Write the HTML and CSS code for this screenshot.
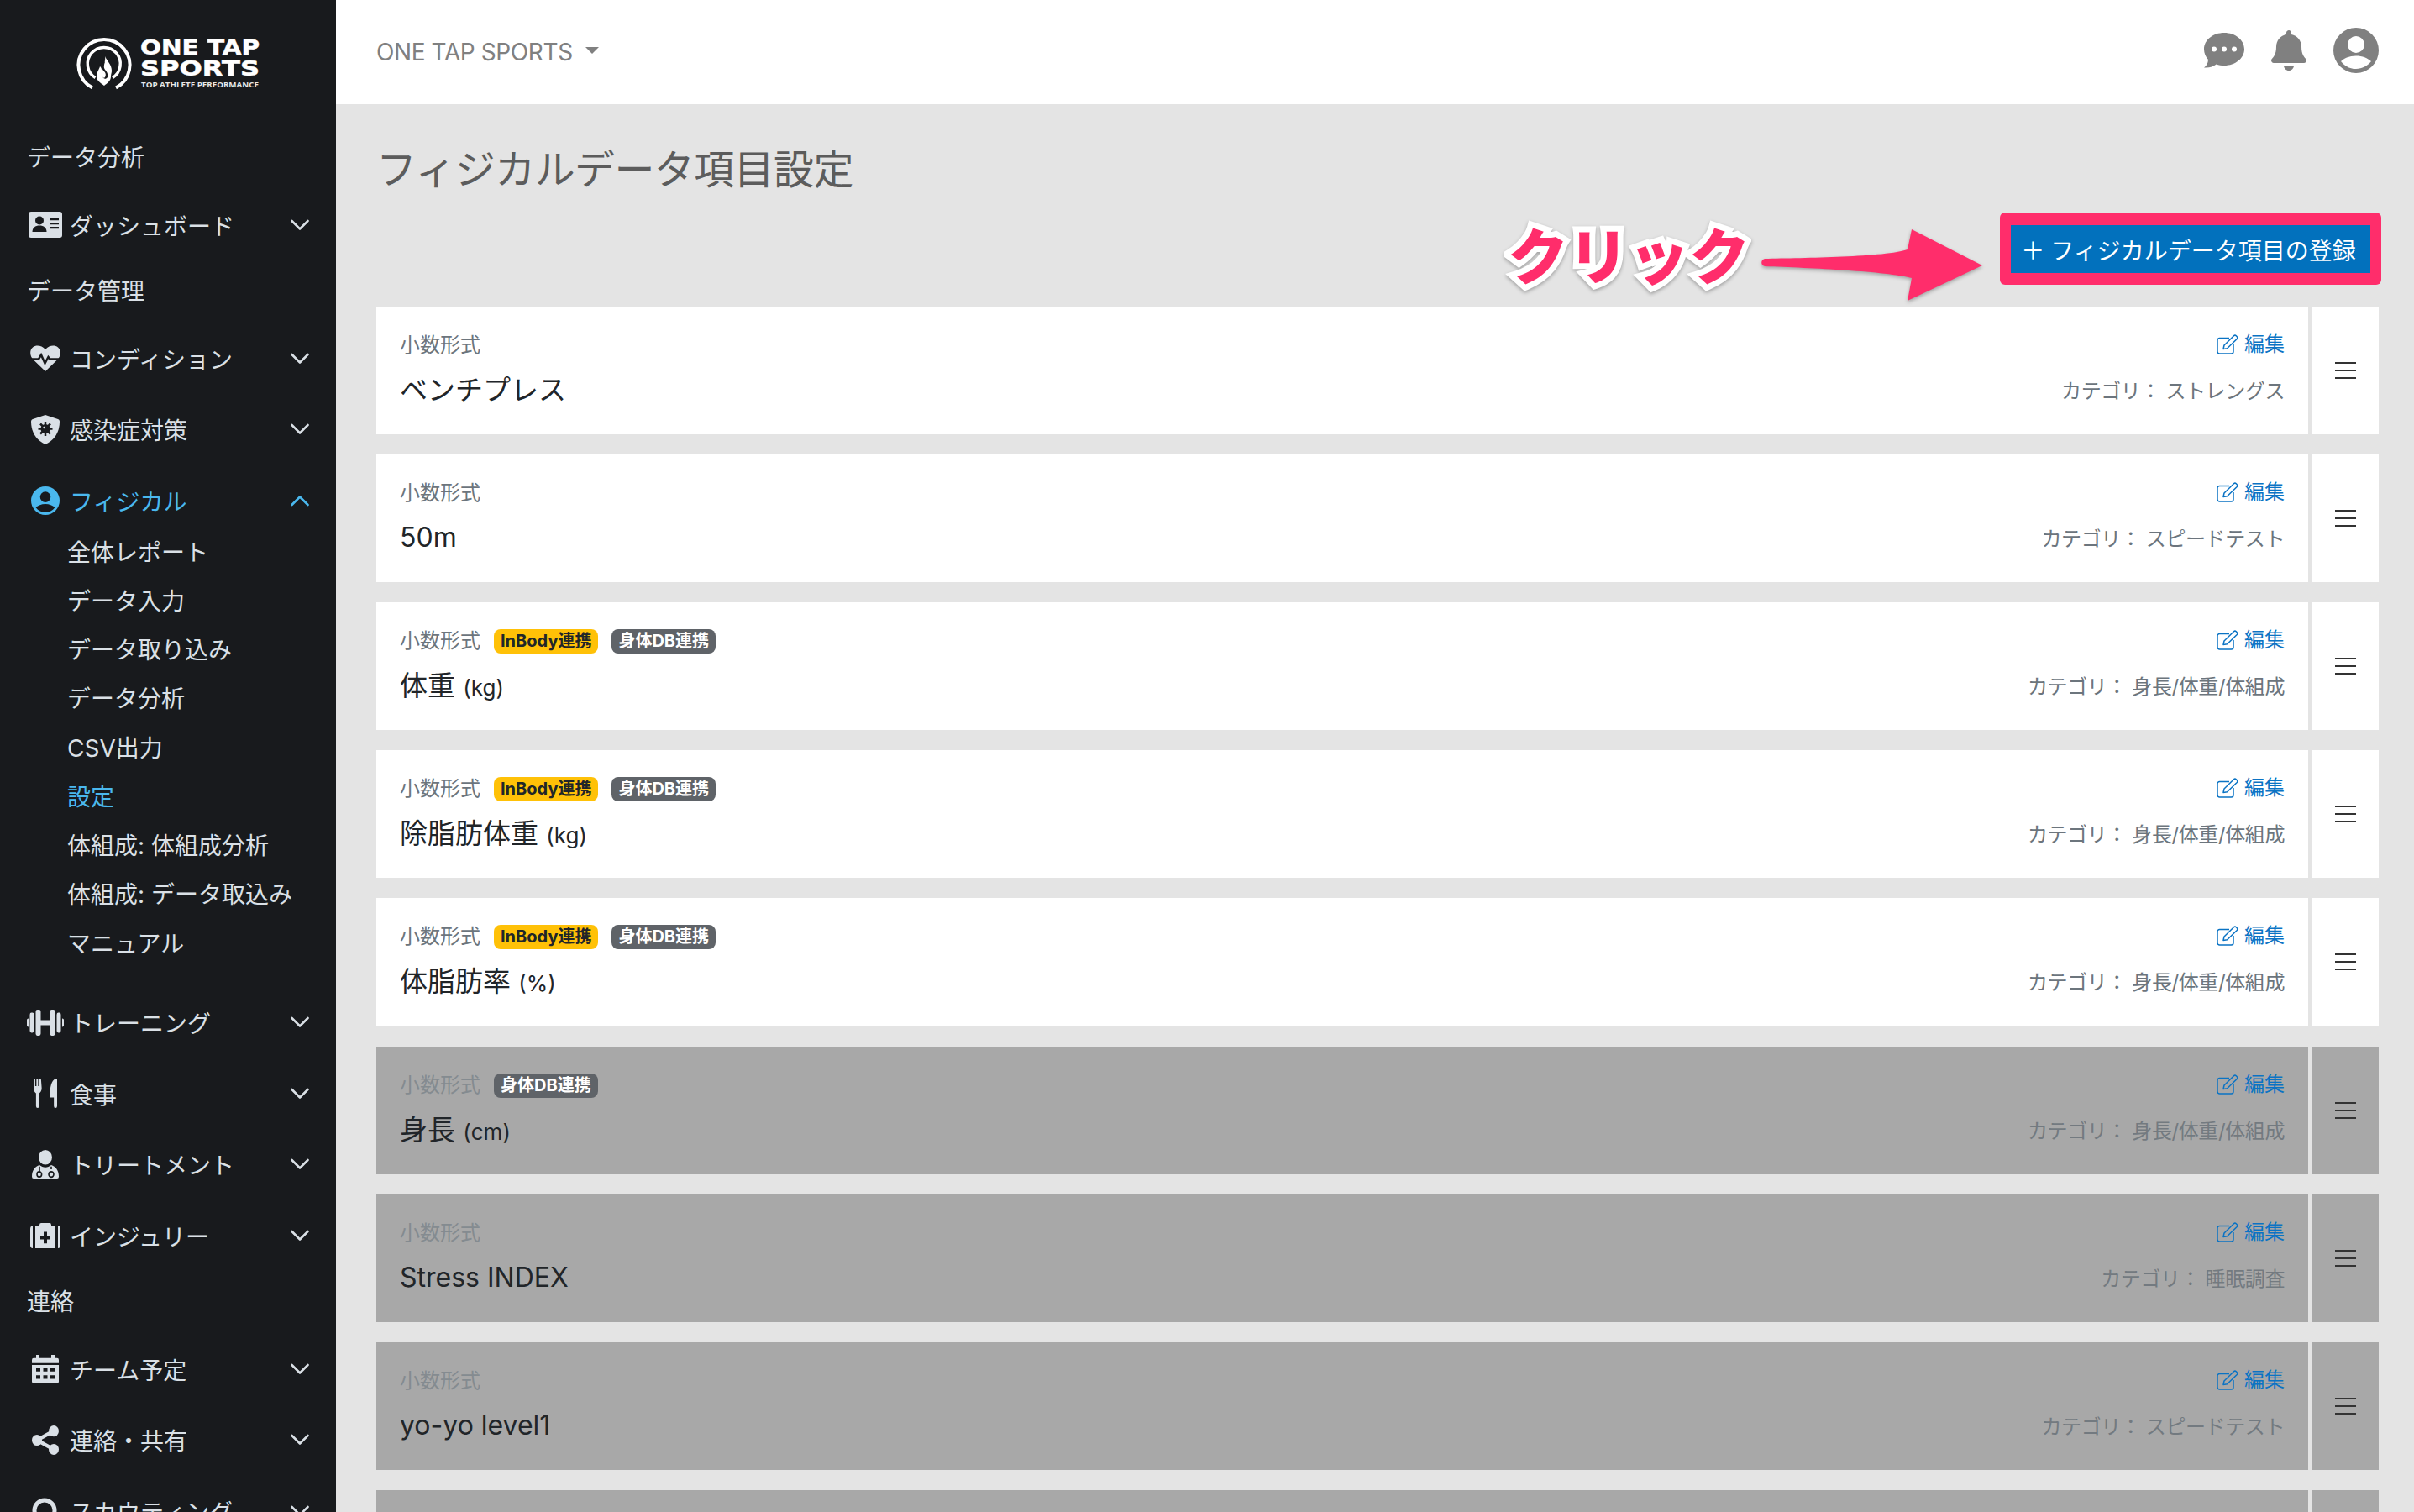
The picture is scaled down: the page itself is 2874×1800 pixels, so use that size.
FILE: index.html
```html
<!DOCTYPE html>
<html lang="ja">
<head>
<meta charset="utf-8">
<title>フィジカルデータ項目設定</title>
<link rel="stylesheet" href="styles.css">
</head>
<body>
<svg class="defs" width="0" height="0" aria-hidden="true">
  <symbol id="chev" viewBox="0 0 22 14"><path d="M1.5 2 11 11.5 20.5 2" fill="none" stroke="currentColor" stroke-width="2.6" stroke-linecap="round" stroke-linejoin="round"/></symbol>
  <symbol id="edit" viewBox="0 0 26 24"><path d="M15 4.5H3.5A2.5 2.5 0 0 0 1 7v13.5A2.5 2.5 0 0 0 3.5 23h14a2.5 2.5 0 0 0 2.5-2.5V12" fill="none" stroke="currentColor" stroke-width="1.5"/><path d="M8 17.5 9 13 20.5 1.8a2 2 0 0 1 2.8 0l.9.9a2 2 0 0 1 0 2.8L12.6 16.8Z" fill="none" stroke="currentColor" stroke-width="1.5" stroke-linejoin="round"/></symbol>
  <symbol id="user" viewBox="0 0 54 54"><path fill="currentColor" fill-rule="evenodd" d="M27 0a27 27 0 1 0 0 54 27 27 0 0 0 0-54Zm0 10a10 10 0 1 1 0 20 10 10 0 0 1 0-20Zm0 23.5c7.500 0 14 2.600 18 6.600C40.500 45.800 34.300 49 27 49S13.500 45.800 9 40.100c4-4 10.500-6.600 18-6.600Z"/></symbol>
</svg>
<div class="app">
  <aside class="sidebar">
    <svg class="logo" viewBox="0 0 400 150" width="400" height="150" role="img" aria-label="ONE TAP SPORTS">
      <path class="logo-arc" stroke-width="4" d="M110 104.500A30.500 30.500 0 1 1 138 104.500"/>
      <path class="logo-arc" stroke-width="3.500" d="M113.500 92.500A19.500 19.500 0 1 1 134 92.500"/>
      <path class="logo-flame" d="M125 67c2 5 8 10 8 17 0 3-1 4-1 7 0 5-4 8-8 11-4-3-9-6-9-11 0-5 3-8 4-12 1 1 2 2 2 4 2-5 5-10 4-16Z"/>
      <path class="logo-flame-in" d="M125 73c-3 4-5 7-2 11 2 2 4 4 2 8-1 1-2 1-3-1 1 3 4 4 6 1 1-4-1-7-3-9-2-3-1-6 0-10Z"/>
      <text class="logo-big" x="167" y="65" textLength="142" lengthAdjust="spacingAndGlyphs">ONE TAP</text>
      <text class="logo-big" x="167" y="90" textLength="142" lengthAdjust="spacingAndGlyphs">SPORTS</text>
      <text class="logo-small" x="168" y="104" textLength="140" lengthAdjust="spacingAndGlyphs">TOP ATHLETE PERFORMANCE</text>
    </svg>
    <nav>
      <div class="nav-label">データ分析</div>
      <div class="nav-item"><span class="nav-ico"><svg width="40" height="31" viewBox="0 0 40 31"><rect class="ic" width="40" height="31" rx="3"/><circle class="ic-d" cx="13" cy="10.500" r="5"/><path class="ic-d" d="M4.500 24c0-5 3.500-7.500 8.500-7.500s8.500 2.500 8.500 7.500Z"/><path class="ic-d" d="M25 8h11v2.200H25zM25 13h11v2.200H25zM25 18h11v2.200H25z"/></svg></span><span>ダッシュボード</span><svg class="chev"><use href="#chev"/></svg></div>
      <div class="nav-label">データ管理</div>
      <div class="nav-item"><span class="nav-ico"><svg width="36" height="31" viewBox="0 0 36 31"><path class="ic" d="M18 31 4 17.500C-1 12.500-.8 5.500 3 2.500 7-.8 13.500 0 18 5c4.500-5 11-5.800 15-2.500 3.800 3 4 10-1 15Z"/><path class="ic-line" d="M0 16.500h10l3-5 4.500 10 4-7.500 2 2.500H36"/></svg></span><span>コンディション</span><svg class="chev"><use href="#chev"/></svg></div>
      <div class="nav-item"><span class="nav-ico"><svg width="34" height="35" viewBox="0 0 34 35"><path class="ic" d="M17 0 32 5c1.500.5 2 1.500 2 3 0 12-6 22-17 27C6 30 0 20 0 8c0-1.500.5-2.500 2-3Z"/><circle class="ic-d" cx="17" cy="16.500" r="5.500"/><path class="ic-line" d="M17 8v17M8.500 16.500h17M11 10.500l12 12M23 10.500l-12 12"/><circle class="ic" cx="15.500" cy="15" r="1.200"/></svg></span><span>感染症対策</span><svg class="chev"><use href="#chev"/></svg></div>
      <div class="nav-item open"><span class="nav-ico"><svg width="34" height="34"><use href="#user"/></svg></span><span>フィジカル</span><svg class="chev up"><use href="#chev"/></svg></div>
      <ul class="sub">
        <li>全体レポート</li>
        <li>データ入力</li>
        <li>データ取り込み</li>
        <li>データ分析</li>
        <li>CSV出力</li>
        <li class="on">設定</li>
        <li>体組成: 体組成分析</li>
        <li>体組成: データ取込み</li>
        <li>マニュアル</li>
      </ul>
      <div class="nav-item"><span class="nav-ico"><svg width="44" height="31" viewBox="0 0 44 26" preserveAspectRatio="none"><path class="ic" d="M0 10.500a1.500 1.500 0 0 1 2-1.500V17a1.500 1.500 0 0 1-2-1.500ZM3.500 5A2 2 0 0 1 5.500 3h1a2 2 0 0 1 2 2v16a2 2 0 0 1-2 2h-1a2 2 0 0 1-2-2ZM10.500 2a2 2 0 0 1 2-2h2a2 2 0 0 1 2 2v8.500h11V2a2 2 0 0 1 2-2h2a2 2 0 0 1 2 2v22a2 2 0 0 1-2 2h-2a2 2 0 0 1-2-2v-8.500h-11V24a2 2 0 0 1-2 2h-2a2 2 0 0 1-2-2ZM35.500 5a2 2 0 0 1 2-2h1a2 2 0 0 1 2 2v16a2 2 0 0 1-2 2h-1a2 2 0 0 1-2-2ZM42 9a1.500 1.500 0 0 1 2 1.500v5a1.500 1.500 0 0 1-2 1.500Z"/></svg></span><span>トレーニング</span><svg class="chev"><use href="#chev"/></svg></div>
      <div class="nav-item"><span class="nav-ico"><svg width="28" height="35" viewBox="0 0 29 31" preserveAspectRatio="none"><path class="ic" d="M0 1c0-1 2-1 2 0v7h1.500V1c0-1 2-1 2 0v7H7V1c0-1 2-1 2.200 0l.8 9c0 3-1.500 4.500-3 5.500V29a2 2 0 0 1-4 0V15.500C1.500 14.500 0 13 0 10ZM29 1v28a2 2 0 0 1-4 0v-9h-3.500c-.8 0-1.500-.7-1.500-1.500C20 9 22 2 27 .2 28 0 29 0 29 1Z"/></svg></span><span>食事</span><svg class="chev"><use href="#chev"/></svg></div>
      <div class="nav-item"><span class="nav-ico"><svg width="32" height="34" viewBox="0 0 32 31" preserveAspectRatio="none"><circle class="ic" cx="16" cy="8" r="8"/><path class="ic" d="M0 29c0-7 4-11 9-12.500 2 1.500 4.500 2.500 7 2.500s5-1 7-2.500C28 18 32 22 32 29a2 2 0 0 1-2 2H2a2 2 0 0 1-2-2Z"/><path class="ic-thin" d="M9 18v5.500M23 18v3M6 26.500a2.800 2.800 0 1 0 5.600 0 2.800 2.800 0 1 0-5.600 0M20 26.500a3 3 0 0 1 6 0 3 3 0 0 1-6 0"/></svg></span><span>トリートメント</span><svg class="chev"><use href="#chev"/></svg></div>
      <div class="nav-item"><span class="nav-ico"><svg width="36" height="30" viewBox="0 0 36 26" preserveAspectRatio="none"><path class="ic" d="M0 6a3 3 0 0 1 3-3v23a3 3 0 0 1-3-3ZM33 3a3 3 0 0 1 3 3v17a3 3 0 0 1-3 3ZM11 3V2a2 2 0 0 1 2-2h10a2 2 0 0 1 2 2v1h5v23H6V3Zm3 0h8V2.500h-8Z"/><path class="ic-d" d="M16 9h4v4h4v4h-4v4h-4v-4h-4v-4h4Z"/></svg></span><span>インジュリー</span><svg class="chev"><use href="#chev"/></svg></div>
      <div class="nav-label">連絡</div>
      <div class="nav-item"><span class="nav-ico"><svg width="32" height="34" viewBox="0 0 32 31" preserveAspectRatio="none"><path class="ic" d="M5 0h4v3.500h14V0h4v3.500h3a2 2 0 0 1 2 2V9H0V5.500a2 2 0 0 1 2-2h3ZM0 11h32v18a2 2 0 0 1-2 2H2a2 2 0 0 1-2-2Z"/><path class="ic-d" d="M5 14h5v4H5zM13.500 14h5v4h-5zM22 14h5v4h-5zM5 22h5v4H5zM13.500 22h5v4h-5zM22 22h5v4h-5z"/></svg></span><span>チーム予定</span><svg class="chev"><use href="#chev"/></svg></div>
      <div class="nav-item"><span class="nav-ico"><svg width="32" height="35" viewBox="0 0 32 32" preserveAspectRatio="none"><circle class="ic" cx="26" cy="6" r="6"/><circle class="ic" cx="6" cy="16" r="6"/><circle class="ic" cx="26" cy="26" r="6"/><path class="ic-stroke" d="M26 6 6 16l20 10"/></svg></span><span>連絡・共有</span><svg class="chev"><use href="#chev"/></svg></div>
      <div class="nav-item"><span class="nav-ico"><svg width="32" height="32" viewBox="0 0 32 32"><circle class="ic-ring" cx="15" cy="15" r="12"/><path class="ic-stroke" d="m24 24 7 7"/></svg></span><span>スカウティング</span><svg class="chev"><use href="#chev"/></svg></div>
    </nav>
  </aside>

  <div class="content">
    <header class="topbar">
      <div class="team">ONE TAP SPORTS<span class="caret"></span></div>
      <div class="top-icons">
        <svg width="48" height="42" viewBox="0 0 48 42"><path class="ti" fill-rule="evenodd" d="M24 0c13.300 0 24 8.600 24 19.500S37.300 39 24 39c-3.300 0-6.400-.5-9.300-1.500C11.500 40 6.500 42 0 41.500c3-2 4.800-5.500 5-9.500C1.900 28.500 0 24.200 0 19.500 0 8.600 10.700 0 24 0ZM12 16.500a3 3 0 1 0 0 6 3 3 0 0 0 0-6Zm12 0a3 3 0 1 0 0 6 3 3 0 0 0 0-6Zm12 0a3 3 0 1 0 0 6 3 3 0 0 0 0-6Z"/></svg>
        <svg width="42" height="48" viewBox="0 0 448 512"><path class="ti" d="M224 512c35.320 0 63.970-28.650 63.970-64H160.030c0 35.350 28.650 64 63.970 64zm215.390-149.710c-19.320-20.760-55.470-51.990-55.470-154.290 0-77.700-54.480-139.900-127.940-155.160V32c0-17.670-14.320-32-31.980-32s-31.980 14.330-31.980 32v20.840C118.560 68.100 64.080 130.300 64.080 208c0 102.300-36.150 133.530-55.470 154.290-6 6.450-8.660 14.160-8.610 21.710.11 16.400 12.980 32 32.100 32h383.800c19.120 0 32-15.600 32.100-32 .05-7.550-2.610-15.270-8.610-21.710z"/></svg>
        <svg class="top-user" width="54" height="54"><use href="#user"/></svg>
      </div>
    </header>

    <main class="main">
      <h1 class="title">フィジカルデータ項目設定</h1>
      <div class="toolbar">
        <div class="highlight"><button class="add" type="button"><span class="plus">＋</span>フィジカルデータ項目の登録</button></div>
      </div>

      <div class="note">クリック</div>
      <svg class="arrow" width="270" height="90" viewBox="0 0 270 90"><path d="M5 35C50 34 150 33 175 24L180 0l84 43-89 42 5-27C150 50 60 46 5 44 0 43 0 36 5 35Z"/></svg>

      <div class="rows">
        <section class="row"><div class="card"><div class="left"><div class="meta"><span class="kind">小数形式</span></div><div class="name jp">ベンチプレス</div></div><div class="right"><a class="edit"><svg width="26" height="24"><use href="#edit"/></svg>編集</a><div class="cat">カテゴリ： ストレングス</div></div></div><div class="grip"><i></i></div></section>
        <section class="row"><div class="card"><div class="left"><div class="meta"><span class="kind">小数形式</span></div><div class="name">50m</div></div><div class="right"><a class="edit"><svg width="26" height="24"><use href="#edit"/></svg>編集</a><div class="cat">カテゴリ： スピードテスト</div></div></div><div class="grip"><i></i></div></section>
        <section class="row"><div class="card"><div class="left"><div class="meta"><span class="kind">小数形式</span><span class="badge inbody">InBody連携</span><span class="badge body">身体DB連携</span></div><div class="name jp">体重 <small>(kg)</small></div></div><div class="right"><a class="edit"><svg width="26" height="24"><use href="#edit"/></svg>編集</a><div class="cat">カテゴリ： 身長/体重/体組成</div></div></div><div class="grip"><i></i></div></section>
        <section class="row"><div class="card"><div class="left"><div class="meta"><span class="kind">小数形式</span><span class="badge inbody">InBody連携</span><span class="badge body">身体DB連携</span></div><div class="name jp">除脂肪体重 <small>(kg)</small></div></div><div class="right"><a class="edit"><svg width="26" height="24"><use href="#edit"/></svg>編集</a><div class="cat">カテゴリ： 身長/体重/体組成</div></div></div><div class="grip"><i></i></div></section>
        <section class="row"><div class="card"><div class="left"><div class="meta"><span class="kind">小数形式</span><span class="badge inbody">InBody連携</span><span class="badge body">身体DB連携</span></div><div class="name jp">体脂肪率 <small>(%)</small></div></div><div class="right"><a class="edit"><svg width="26" height="24"><use href="#edit"/></svg>編集</a><div class="cat">カテゴリ： 身長/体重/体組成</div></div></div><div class="grip"><i></i></div></section>
      </div>
      <div class="rows off">
        <section class="row"><div class="card"><div class="left"><div class="meta"><span class="kind">小数形式</span><span class="badge body">身体DB連携</span></div><div class="name jp">身長 <small>(cm)</small></div></div><div class="right"><a class="edit"><svg width="26" height="24"><use href="#edit"/></svg>編集</a><div class="cat">カテゴリ： 身長/体重/体組成</div></div></div><div class="grip"><i></i></div></section>
        <section class="row"><div class="card"><div class="left"><div class="meta"><span class="kind">小数形式</span></div><div class="name">Stress INDEX</div></div><div class="right"><a class="edit"><svg width="26" height="24"><use href="#edit"/></svg>編集</a><div class="cat">カテゴリ： 睡眠調査</div></div></div><div class="grip"><i></i></div></section>
        <section class="row"><div class="card"><div class="left"><div class="meta"><span class="kind">小数形式</span></div><div class="name">yo-yo level1</div></div><div class="right"><a class="edit"><svg width="26" height="24"><use href="#edit"/></svg>編集</a><div class="cat">カテゴリ： スピードテスト</div></div></div><div class="grip"><i></i></div></section>
        <section class="row"><div class="card"></div><div class="grip"></div></section>
      </div>
    </main>
  </div>
</div>
</body>
</html>
```
FILE: styles.css
```css
* { box-sizing: border-box; }
html, body { margin: 0; height: 100%; overflow: hidden; }
body { font-family: "Inter", "Noto Sans CJK JP", sans-serif; font-size: 28px; color: #212529; background: #e4e4e4; }
.defs { position: absolute; }
.app { display: flex; height: 1800px; overflow: hidden; }

/* sidebar */
.sidebar { flex: 0 0 400px; background: #181a1d; color: #dae0e6; overflow: hidden; }
.logo { display: block; }
.logo-arc { fill: none; stroke: #fff; }
.logo-flame { fill: #fff; }
.logo-flame-in { fill: #181a1d; }
.logo-big { font-family: "DejaVu Sans", sans-serif; font-weight: 700; font-size: 24px; fill: #fff; stroke: #fff; stroke-width: .5px; }
.logo-small { font-family: "Open Sans", sans-serif; font-weight: 700; font-size: 8.500px; fill: #e8e8e8; }
.nav-label { height: 74.500px; padding: 0 0 2px 32px; display: flex; align-items: center; }
.nav-item { height: 84.500px; padding: 2px 32px 0; display: flex; align-items: center; }
.nav-ico { flex: 0 0 44px; margin-right: 7px; display: flex; justify-content: center; }
.nav-ico svg { display: block; }
.chev { width: 22px; height: 14px; margin-left: auto; color: #dae0e6; }
.chev.up { transform: rotate(180deg); color: inherit; }
.open { color: #4ab8ee; }
.ic { fill: #dae0e6; }
.open .nav-ico { color: #4ab8ee; }
.ic-d { fill: #181a1d; }
.ic-line { fill: none; stroke: #181a1d; stroke-width: 2.500px; }
.ic-thin { fill: none; stroke: #181a1d; stroke-width: 1.600px; }
.ic-stroke { fill: none; stroke: #dae0e6; stroke-width: 4px; }
.ic-ring { fill: none; stroke: #dae0e6; stroke-width: 5px; }
.sub { list-style: none; margin: -10px 0 22.500px; padding: 0 0 0 80px; }
.sub li { height: 58.250px; padding-bottom: 1px; display: flex; align-items: center; }
.sub .on { color: #4ab8ee; }

/* top bar */
.content { flex: 1; display: flex; flex-direction: column; min-width: 0; }
.topbar { flex: 0 0 124px; background: #fff; padding: 0 36px 0 48px; display: flex; align-items: center; justify-content: space-between; }
.team { color: #808080; display: flex; align-items: center; letter-spacing: -.4px; }
.caret { margin-left: 15px; margin-top: -4px; border: 8px solid transparent; border-top-color: #808080; border-bottom-width: 0; }
.top-icons { display: flex; align-items: center; gap: 32px; margin: -4px 6px 0 0; }
.ti { fill: #808080; }
.top-user { color: #808080; }

/* main */
.main { flex: 1; position: relative; padding: 0 42px 0 48px; }
.title { margin: 0; padding-top: 42px; font-size: 48px; line-height: 72px; font-weight: 400; letter-spacing: -.6px; color: #5c5c5c; }
.toolbar { display: flex; justify-content: flex-end; margin: 15px -3px 26px 0; }
.highlight { background: #ff2d6b; border-radius: 6px; padding: 15px 13px 14px; }
.add { display: flex; align-items: center; justify-content: center; width: 428px; height: 57px; padding: 0 5px 0 0; border: 0; background: #0271bd; color: #fff; font: inherit; font-size: 28px; }
.plus { margin-right: 7px; font-weight: 400; }
.note { position: absolute; left: 1395px; top: 137px; font-size: 72px; line-height: 90px; font-weight: 900; color: #ff2d6b; -webkit-text-stroke: 14px #fff; paint-order: stroke fill; filter: drop-shadow(0 2px 2px rgba(0,0,0,.3)); white-space: nowrap; }
.arrow { position: absolute; left: 1696px; top: 149px; fill: #ff2d6b; filter: drop-shadow(0 2px 2px rgba(0,0,0,.3)); }
.rows { display: flex; flex-direction: column; gap: 24px; }
.rows.off { margin-top: 25px; }
.row { display: flex; gap: 4px; height: 152px; flex: none; }
.card { flex: 1; background: #fff; padding: 0 28px; display: flex; justify-content: space-between; }
.grip { flex: 0 0 80px; background: #fff; display: flex; align-items: center; justify-content: center; }
.grip i { display: block; width: 25px; height: 20px; border-top: 2px solid #333; border-bottom: 2px solid #333; position: relative; }
.grip i::after { content: ""; position: absolute; left: 0; right: 0; top: 7px; height: 2px; background: #333; }
.meta { display: flex; align-items: center; height: 29px; margin-top: 32px; font-size: 24px; }
.kind { color: #6c757d; margin-bottom: 7px; }
.badge { height: 29px; line-height: 29px; padding: 0 8px; border-radius: 8px; font-size: 20px; font-weight: 700; margin-left: 16px; }
.inbody { background: #ffc107; color: #212529; }
.body { background: #5f6368; color: #fff; }
.name { font-size: 32px; line-height: 48px; margin-top: 14px; }
.name.jp { font-size: 33px; }
.name small { font-size: 26px; }
.right { text-align: right; display: flex; flex-direction: column; align-items: flex-end; }
.edit { height: 36px; margin-top: 27px; color: #0a73c4; font-size: 24px; line-height: 36px; display: flex; align-items: center; gap: 7px; }
.cat { margin-top: 20px; height: 36px; line-height: 36px; font-size: 24px; letter-spacing: -.4px; color: #6c757d; }
.off .card, .off .grip { background: #a8a8a8; }
.off .kind { color: #848b90; }
.off .cat { color: #737a80; }
```
